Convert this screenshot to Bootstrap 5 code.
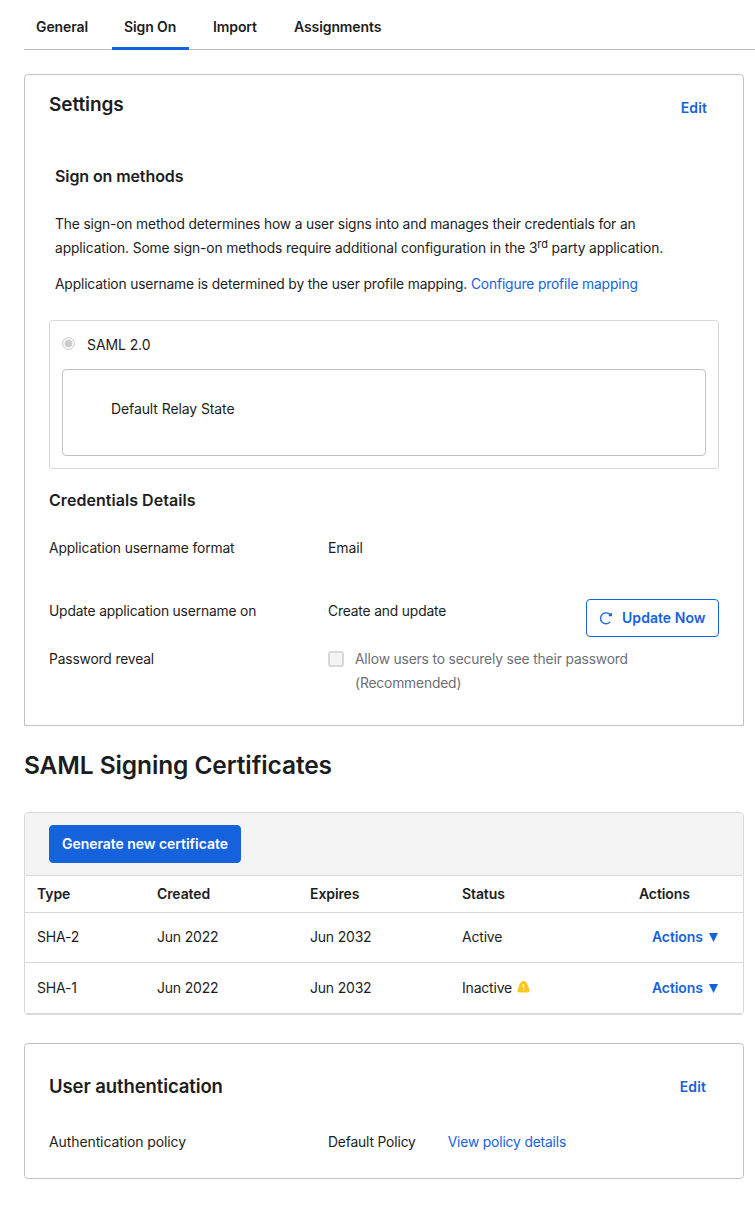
<!DOCTYPE html>
<html lang="en">
<head>
<meta charset="utf-8">
<meta name="viewport" content="width=device-width, initial-scale=1">
<title>Sign On</title>
<link href="https://cdn.jsdelivr.net/npm/bootstrap@5.3.0/dist/css/bootstrap.min.css" rel="stylesheet">
<style>
  :root { --ink:#1d1d21; --blue:#1662dd; --edge:#c1c1c8; --edge-soft:#d7d7dc; --muted-ink:#6e6e78; }
  body { font-family:Inter,"Noto Sans",sans-serif; font-size:14px; line-height:24px; color:var(--ink); background:#fff; letter-spacing:-.1px; overflow-x:hidden; }
  a { color:var(--blue); text-decoration:none; }
  h1,h2,h3,p { margin:0; }
  .app-tabs { height:50px; border-bottom:1px solid #bfbfbf; gap:12px; padding-top:2px; flex-wrap:nowrap; }
  .app-tabs .nav-link { height:48px; padding:13px 12px 0; color:var(--ink); font-weight:600; white-space:nowrap; border-bottom:3px solid transparent; }
  .app-tabs .nav-link.active { border-color:var(--blue); }
  .w-general{width:76px}.w-signon{width:77px}.w-import{width:69px}.w-assign{width:111px}
  .panel { width:720px; border:1px solid var(--edge); border-radius:4px; padding:0 24px; }
  .panel-settings { height:652px; margin-top:24px; border-radius:4px 4px 0 0; }
  .panel-head { padding-top:17px; }
  .panel-title { font-size:18.5px; line-height:26px; font-weight:600; }
  .panel-settings .panel-title { font-size:19px; }
  .edit-link { font-weight:600; letter-spacing:.1px; margin-right:12px; }
  .sub-title { font-size:16px; line-height:24px; font-weight:600; }
  .cred-title { letter-spacing:.05px; padding-top:3px; }
  .methods { margin-top:44px; padding-left:6px; }
  .text-tight { font-size:13.8px; letter-spacing:-.15px; }
  .line-wide { letter-spacing:-.115px; }
  .method-box { height:149px; border:1px solid var(--edge-soft); border-radius:3px; padding:12px; margin-top:24px; }
  .relay-box { height:87px; border:1px solid var(--edge); border-radius:4px; padding:27px 48px 0; margin-top:12px; }
  sup { font-size:11px; top:-.5em; }
  .radio-dot { width:13px; height:13px; flex:none; margin-top:4px; }
  .label-col { width:279px; flex:none; }
  .row-format { margin-top:24px; }
  .row-update { margin-top:39px; }
  .row-reveal { margin-top:10px; }
  .tick { width:16px; height:16px; border:2px solid var(--edge-soft); border-radius:3px; background:#f4f4f4; flex:none; margin-top:4px; }
  .muted-text { color:var(--muted-ink); margin-left:11px; }
  .btn { font-size:14px; line-height:24px; font-weight:600; border-radius:4px; padding:6px 12px; letter-spacing:inherit; white-space:nowrap; }
  .btn-update { width:133px; height:38px; color:var(--blue); border:1px solid var(--blue); background:#fff; letter-spacing:.05px; }
  .btn-update span { margin-left:9px; }
  .btn-generate { width:192px; height:38px; color:#fff; background:var(--blue); border:1px solid var(--blue); letter-spacing:-.05px; }
  .page-title { font-size:24.5px; line-height:32px; font-weight:600; margin-top:23px; }
  .cert-box { width:720px; margin-top:31px; border:1px solid var(--edge-soft); border-radius:4px; overflow:hidden; }
  .cert-bar { height:63px; padding:12px 24px; background:#f4f4f4; border-bottom:1px solid var(--edge-soft); }
  .cert-table { table-layout:fixed; margin:0; color:var(--ink); border-color:var(--edge-soft); }
  .cert-table > :not(caption) > * > * { padding:0 12px; border-bottom:1px solid var(--edge-soft); vertical-align:middle; color:var(--ink); background:#fff; }
  .cert-table th { height:36px; font-weight:600; }
  .cert-table td { height:50px; letter-spacing:-.2px; }
  .cert-table tr:last-child td { height:51px; }
  .cert-table td.act { padding-left:25px; font-weight:600; letter-spacing:-.1px; }
  .caret { margin:-1px 0 0 3px; }
  .warn { margin:-3px 0 0 1px; }
  .panel-auth { height:136px; margin-top:28px; }
  .panel-auth .panel-head { padding-top:29px; }
  .panel-auth .edit-link { margin-right:13px; padding-top:2px; }
  .row-policy { margin-top:31px; }
  .row-policy a { margin-left:32px; }
</style>
</head>
<body>
<main class="ps-4">
  <nav class="nav app-tabs">
    <a class="nav-link w-general" href="#">General</a>
    <a class="nav-link active w-signon" href="#">Sign On</a>
    <a class="nav-link w-import" href="#">Import</a>
    <a class="nav-link w-assign" href="#">Assignments</a>
  </nav>

  <section class="panel panel-settings">
    <div class="panel-head d-flex justify-content-between">
      <h2 class="panel-title">Settings</h2>
      <a class="edit-link pt-1" href="#">Edit</a>
    </div>
    <div class="methods">
      <h3 class="sub-title">Sign on methods</h3>
      <p class="mt-4 text-nowrap text-tight">The sign-on method determines how a user signs into and manages their credentials for an<br><span class="line-wide">application. Some sign-on methods require additional configuration in the 3<sup>rd</sup> party application.</span></p>
      <p class="mt-2 pt-1 text-nowrap text-tight">Application username is determined by the user profile mapping. <a href="#">Configure profile mapping</a></p>
    </div>
    <div class="method-box">
      <div class="d-flex">
        <svg class="radio-dot" viewBox="0 0 13 13"><circle cx="6.5" cy="6.5" r="6" fill="#f8f8f8" stroke="#cbcbcb"/><circle cx="6.5" cy="6.5" r="3.8" fill="#cbcbcb"/></svg>
        <span class="ms-2 ps-1">SAML 2.0</span>
      </div>
      <div class="relay-box">Default Relay State</div>
    </div>
    <h3 class="sub-title cred-title mt-3">Credentials Details</h3>
    <div class="d-flex row-format"><span class="label-col text-tight line-wide">Application username format</span><span>Email</span></div>
    <div class="d-flex justify-content-between row-update">
      <div class="d-flex"><span class="label-col text-tight">Update application username on</span><span class="text-tight">Create and update</span></div>
      <button class="btn btn-update d-flex align-items-center"><svg width="14" height="14" viewBox="0 0 14 14" fill="none" stroke="currentColor" stroke-width="1.3"><path d="M11.2 10.9A5.5 5.5 0 1 1 11.6 4.2M12.3 2V4.7H9.8"/></svg><span>Update Now</span></button>
    </div>
    <div class="d-flex row-reveal"><span class="label-col text-tight">Password reveal</span><span class="tick"></span><span class="muted-text text-tight">Allow users to securely see their password<br>(Recommended)</span></div>
  </section>

  <h1 class="page-title">SAML Signing Certificates</h1>

  <section class="cert-box">
    <div class="cert-bar"><button class="btn btn-generate">Generate new certificate</button></div>
    <table class="table cert-table">
      <colgroup><col style="width:120px"><col style="width:153px"><col style="width:152px"><col style="width:177px"><col style="width:116px"></colgroup>
      <thead><tr><th>Type</th><th>Created</th><th>Expires</th><th>Status</th><th>Actions</th></tr></thead>
      <tbody>
        <tr><td>SHA-2</td><td>Jun 2022</td><td>Jun 2032</td><td>Active</td><td class="act"><a href="#">Actions <svg class="caret" width="9" height="9" viewBox="0 0 9 9"><path d="M0 0H9L4.5 9Z" fill="currentColor"/></svg></a></td></tr>
        <tr><td>SHA-1</td><td>Jun 2022</td><td>Jun 2032</td><td>Inactive <svg class="warn" width="13" height="12" viewBox="0 0 13 12"><path d="M6.5 0C8 0 9.2 1 10.3 3L12.3 8.5C13 10.5 12.3 11.5 10.5 11.5H2.5C.7 11.5 0 10.5.7 8.5L2.7 3C3.8 1 5 0 6.5 0Z" fill="#ffc61a"/><path d="M6.5 3V7M6.5 8.5V10" stroke="#fff" stroke-width="1.4"/></svg></td><td class="act"><a href="#">Actions <svg class="caret" width="9" height="9" viewBox="0 0 9 9"><path d="M0 0H9L4.5 9Z" fill="currentColor"/></svg></a></td></tr>
      </tbody>
    </table>
  </section>

  <section class="panel panel-auth">
    <div class="panel-head d-flex justify-content-between">
      <h2 class="panel-title">User authentication</h2>
      <a class="edit-link" href="#">Edit</a>
    </div>
    <div class="d-flex row-policy"><span class="label-col">Authentication policy</span><span class="text-tight">Default Policy</span><a class="text-tight" href="#">View policy details</a></div>
  </section>
</main>
<script src="https://cdn.jsdelivr.net/npm/bootstrap@5.3.0/dist/js/bootstrap.bundle.min.js"></script>
</body>
</html>
